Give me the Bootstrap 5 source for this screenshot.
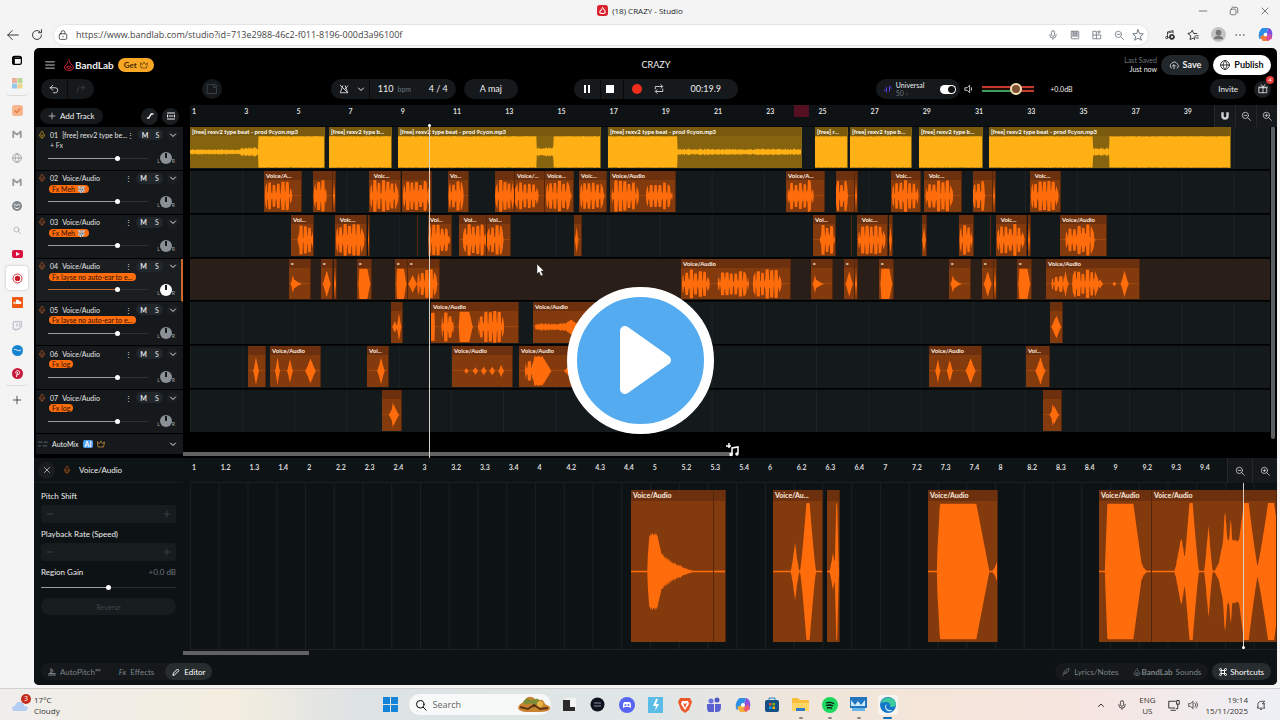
<!DOCTYPE html>
<html lang="en">
<head>
<meta charset="utf-8">
<meta name="viewport" content="width=device-width, initial-scale=1">
<title>(18) CRAZY - Studio</title>
<link href="https://cdn.jsdelivr.net/npm/bootstrap@5.3.0/dist/css/bootstrap.min.css" rel="stylesheet">
<style>
:root{--app:Lato,"Open Sans",sans-serif;--win:"Open Sans","Noto Sans",sans-serif;--panel:#15191c;--pill:#1c2125;--orange:#ff6c0c;--gold:#ffb014}
body{font-family:var(--win);font-size:10px;line-height:12px;background:#f4f4f4;color:#333;min-height:100vh;overflow:hidden}
svg{display:block;flex:none}
.ic{width:12px;height:12px;fill:none;stroke:currentColor;stroke-width:1.3;stroke-linecap:round;stroke-linejoin:round}
.ic-s{width:8px;height:8px}
.ic-m{width:10px;height:10px}
button{border:0;background:none;color:inherit;padding:0;font:inherit;display:flex;align-items:center;justify-content:center;flex:none}
/* browser chrome */
.titlebar{height:21px;font-size:8px}
.win-btns{position:absolute;right:10px;top:0;height:21px;gap:21px}
.win-btns .ic{stroke-width:1}
.addressbar{height:27px;padding:0 7px 0 7px}
.url-box{height:22px;background:#fff;border:1px solid #e4e4e4;border-radius:11px;margin-left:10px}
.url-box input{border:0;outline:0;background:none;font-size:9px;color:#444;height:18px}
.side-rail{width:34px}
.side-rail a{height:24px;width:22px;display:flex;align-items:center;justify-content:center;border-radius:4px;color:#333}
.side-rail a.on{background:#fff;box-shadow:0 0 3px #bbb}
.side-rail .cut{border-bottom:1px solid #ddd;margin-bottom:2px}
.fade-ic{opacity:.45}
/* studio */
.studio{background:#000;border-radius:5px;font-family:var(--app);color:#eee;font-size:8px;line-height:10px;margin-right:3px;overflow:hidden;min-width:0}
.head-grid{display:grid;grid-template-columns:1fr auto 1fr;align-items:center;padding:0 6px 0 7px}
.head-one{height:30px;padding-top:4px}
.head-two{height:27px;padding-bottom:5px}
.brand{font-size:10px;font-weight:700;color:#eee}
.pill{background:#15191c;border-radius:12px;height:20px;display:flex;align-items:center}
.pill-lite{background:#22272b}
.get-pill{background:#f9a825;color:#4b2c00;height:14px;width:36px;border-radius:7px;font-weight:700;gap:3px}
.split{width:1px;height:20px;background:#07090a}
.save{width:48px;font-size:9px;font-weight:700;gap:4px}
.publish{width:58px;font-size:9px;font-weight:700;background:#fff;color:#111;gap:4px}
.tempo{width:125px}
.clock{font-size:9px}
.transport{width:164px;padding:0 17px 0 8px}
.form-switch .form-check-input{width:16px;height:9px;margin:0;border:0;background-color:#fff;background-image:radial-gradient(circle,#111 0 3px,transparent 4px);background-size:9px 9px;background-position:right center;background-repeat:no-repeat;min-height:0;float:none;display:block}
.gift-count{position:absolute;top:-5px;right:-3px;width:8px;height:8px;border-radius:50%;background:#e53935;font-size:6px;line-height:8px;text-align:center}
.meter{width:52px;height:6px;background:linear-gradient(#c33a30 0 2px,#230a08 2px 4px,#3e9b5a 4px);position:relative}
.meter::after{content:"";position:absolute;right:0;top:4px;width:20px;height:2px;background:#c33a30}
.meter i{position:absolute;left:28px;top:-3px;width:12px;height:12px;border:2px solid #f5dfb5;border-radius:50%;background:#7d5133;z-index:1}
.gain-text{width:136px;font-size:7px}
/* ranges */
input[type=range]{appearance:none;-webkit-appearance:none;background:none;height:7px;margin:0;display:block;min-width:0}
input[type=range]::-webkit-slider-runnable-track{height:1px;background:linear-gradient(90deg,var(--on,#9a9ea1) var(--at,70%),#2c3134 0)}
input[type=range]::-webkit-slider-thumb{-webkit-appearance:none;width:5px;height:5px;border-radius:50%;background:#fff;margin-top:-2px}
/* arranger */
.left-col{width:149px;padding-left:2px;flex:none}
.tool-row{height:22px}
.circle{width:17px;height:17px;border-radius:50%;background:#1a1e21}
.tracks{display:grid;grid-auto-rows:1fr;height:307px}
.track-head{background:var(--panel);border-bottom:1px solid #000;padding:2px 5px 0 2px;color:#e6e6e6;font-size:7px;min-width:0}
.track-head.sel{border-right:2px solid #c8682a;padding-right:3px;background:#1a1e21}
.track-name{flex:1 1 0;white-space:nowrap}
.ms{background:#22272b;border-radius:6px;height:11px;width:27px}
.fx-chip{height:8px;line-height:8px;border-radius:4px;background:var(--orange);color:#2b0e00;padding:0 3px;font-size:7px;width:fit-content;white-space:nowrap;margin:1px 0 0 11px}
.fx-chip.none{background:none;color:#ddd;padding:0 1px}
.mix-row{padding:0 3px 0 10px;height:18px}
.mix-row input{width:100px}
.knob{width:12px;height:12px;border-radius:50%;background:#8a9096;position:relative}
.knob::after{content:"";position:absolute;left:5px;top:1px;width:2px;height:5px;background:#15191c}
.sel .knob{background:#fff}
.knob-wrap{font-size:5px;line-height:6px;color:#aaa;align-items:end}
.automix{height:20px;background:var(--panel);margin-bottom:4px;font-size:7px;padding:0 6px 0 2px}
.ai{background:#4a9df0;color:#fff;border-radius:2px;padding:0 2px;font-weight:700;line-height:8px}
.lane-area{position:relative;margin-left:7px;min-width:0}
.ruler{height:21px;background:#0e1214;position:relative;overflow:hidden}
.ruler span{position:absolute;top:1px;font-size:7px;line-height:10px;color:#ddd;font-weight:700;padding-left:2px}
.lane{position:relative;border-bottom:1px solid #000;border-top:1px solid #070909;background:#14191c linear-gradient(90deg,#1c2225 1px,transparent 1px);background-size:calc(100% / 20.7) 100%;overflow:hidden}
.lane.sel{background-color:#2a1f18;background-image:none}
.clip{position:absolute;top:0;bottom:1px;background:#833a0c;color:#fff0e0;font-size:6px;line-height:9px;overflow:hidden;white-space:nowrap;border-right:1px solid #54270c}
.clip b{display:block;height:9px;padding-left:2px;background:#6d300e;font-weight:700;position:relative}
.clip svg{position:absolute;left:0;top:9px;width:100%;height:calc(100% - 9px)}
.clip path{fill:var(--orange)}
.clip.gold{background:#86630f;border-right-color:#86630f}
.clip.gold b{background:#7a5a0c;color:#fff}
.clip.gold path{fill:var(--gold)}
.playhead{position:absolute;width:1px;background:#d8cfc4;z-index:3}
.playhead::before{content:"";position:absolute;left:-1px;top:0;width:3px;height:3px;border-radius:50%;background:#fff}
.playhead.low::before{top:auto;bottom:0}
.zoom-tools{position:absolute;right:0;top:0;z-index:2}
.zoom-tools button{width:21px;height:22px;background:#15191c;border-left:1px solid #22282b;color:#ccc}
.editor .zoom-tools button{width:25px;height:25px}
.vscroll{width:4px;background:#5c5f61;border-radius:2px;margin:21px 2px 19px 1px;flex:none}
.hscroll{position:absolute;height:4px;background:#626262;z-index:2}
.loop-mark{position:absolute;top:0;height:12px;background:#541020}
.pointer{position:absolute;z-index:4}
/* editor */
.editor{background:#0d1214}
.editor-left{font-size:8px;padding:8px 7px 0 7px}
.stepper{height:18px;border-radius:3px;background:#171c1f;color:#485056;padding:0 5px;margin:4px 0 6px}
.gain-row{margin-bottom:7px}
.reverse{height:17px;border-radius:9px;background:#171c1f;color:#3f464a;font-size:7px;margin-top:7px}
.edit-ruler{height:25px;background:#0e1315;border-bottom:1px solid #191f21}
.edit-ruler span{top:4px}
.edit-body{position:relative;overflow:hidden;border-bottom:1px solid #1d2325;margin-bottom:8px;background:linear-gradient(90deg,#1a2022 1px,transparent 1px);background-size:calc(100% / 37.8) 100%}
.edit-body .clip{top:7px;bottom:7px;font-size:7px;line-height:11px;font-weight:400}
.edit-body .clip b{height:11px;font-weight:700}
.edit-body .clip svg{top:13px;height:calc(100% - 15px)}
.footbar{height:27px;padding:0 6px 0 7px;background:#0d1214;color:#7c8488;font-size:8px}
.footbar .pill{height:17px;font-size:8px;gap:4px}
.footbar button.pill{padding:0 7px}
.footbar .tight{padding:0 6px}
.footbar .lit{background:#272c2f;color:#fff}
/* overlay */
.big-play{position:fixed;left:50%;top:50%;width:147px;height:147px;margin:-73px 0 0 -73px;border-radius:50%;border:10px solid #fff;background:#55abef;z-index:10}
/* taskbar */
.taskbar{display:grid;grid-template-columns:1fr auto 1fr;align-items:center;height:32px;margin-top:3px;border-top:1px solid #d3cfcf;background:linear-gradient(90deg,#f0eeec,#f4eee0 18%,#dde2e4 28%,#e1e6e6 52%,#efe6dc 62%,#f4e5d8 72%,#f6e4df 84%,#eef0f6);font-size:9px;line-height:11px;padding:0 14px 0 12px}
.task-icons>button{width:20px;height:20px;position:relative;margin-right:9px}
.task-icons .run::after{content:"";position:absolute;bottom:-4px;width:4px;height:2px;border-radius:1px;background:#888}
.task-icons .run-on{background:#f8f5f0;border-radius:3px}
.task-icons .run-on::after{width:9px;background:#0a6fb8}
.search{width:142px;height:21px;border-radius:11px;background:#f7f8f8;margin:0 8px 0 8px;padding:0 0 0 6px}
.search input{border:0;outline:0;background:none;font-size:9px;width:80px}
.search input::placeholder{color:#666}
.alerts{position:absolute;left:9px;top:-4px;width:10px;height:10px;border-radius:50%;background:#c42b1c;color:#fff;font-size:7px;line-height:10px;text-align:center}
</style>
</head>
<body class="d-flex flex-column">
<svg class="d-none">
<symbol id="mic" viewBox="0 0 16 16"><rect x="5.5" y="1" width="5" height="9" rx="2.5"/><path d="M3 7v1a5 5 0 0 0 10 0V7M8 13v2"/></symbol>
<symbol id="chev" viewBox="0 0 16 16"><path d="M3 6l5 5 5-5" stroke-width="2"/></symbol>
<symbol id="plus" viewBox="0 0 16 16"><path d="M8 2v12M2 8h12"/></symbol>
<symbol id="minus" viewBox="0 0 16 16"><path d="M2 8h12"/></symbol>
<symbol id="cross" viewBox="0 0 16 16"><path d="M3 3l10 10M13 3L3 13"/></symbol>
<symbol id="zout" viewBox="0 0 16 16"><circle cx="7" cy="7" r="5"/><path d="M11 11l4 4M5 7h4"/></symbol>
<symbol id="zin" viewBox="0 0 16 16"><circle cx="7" cy="7" r="5"/><path d="M11 11l4 4M5 7h4M7 5v4"/></symbol>
<symbol id="find" viewBox="0 0 16 16"><circle cx="7" cy="7" r="5"/><path d="M11 11l4 4"/></symbol>
<symbol id="crown" viewBox="0 0 16 16"><path d="M1 4l4 3 3-5 3 5 4-3-2 10H3z"/></symbol>
<symbol id="undo" viewBox="0 0 16 16"><path d="M6 2L2 6l4 4M2 6h8a4 4 0 0 1 0 8H7"/></symbol>
<symbol id="flame" viewBox="0 0 16 16"><path d="M8 1c1 4 2 5 4 7 4 3 2 7-4 7s-8-4-4-7c1-1 2-2 2-4M5 11c0-2 6-2 6 0s-6 2-6 0"/></symbol>
<symbol id="star" viewBox="0 0 16 16"><path d="M8 1l2 5 5 .5-4 3.500 1.500 5L8 12.200 3.500 15 5 10 1 6.500 6 6z"/></symbol>
<symbol id="globe" viewBox="0 0 16 16"><circle cx="8" cy="8" r="7"/><path d="M1 8h14M8 1c-4 4-4 10 0 14M8 1c4 4 4 10 0 14"/></symbol>
<symbol id="sound" viewBox="0 0 16 16"><path d="M1 6h3l4-4v12l-4-4H1zM11 5c2 2 2 4 0 6M13 3c3 3 3 7 0 10"/></symbol>
</svg>

<header class="titlebar d-flex align-items-center justify-content-center gap-1 position-relative">
  <svg width="11" height="11" viewBox="0 0 16 16"><rect width="16" height="16" rx="4" fill="#d9232e"/><path d="M8 3c0 3 4 4 4 7s-8 3-8 0c0-2 3-2 3-5" fill="none" stroke="#fff" stroke-width="1.500"/></svg>
  <span class="text-dark">(18) CRAZY - Studio</span>
  <div class="win-btns d-flex align-items-center">
    <button aria-label="Minimize"><svg class="ic ic-m"><use href="#minus"/></svg></button>
    <button aria-label="Restore"><svg class="ic ic-m" viewBox="0 0 16 16"><rect x="2" y="5" width="9" height="9" rx="2"/><path d="M5 2h6a3 3 0 0 1 3 3v6"/></svg></button>
    <button aria-label="Close"><svg class="ic ic-m"><use href="#cross"/></svg></button>
  </div>
</header>

<div class="addressbar d-flex align-items-center">
  <button aria-label="Back"><svg class="ic" viewBox="0 0 16 16"><path d="M15 8H1M7 2L1 8l6 6"/></svg></button>
  <button aria-label="Reload" class="ms-2 ps-1"><svg class="ic" viewBox="0 0 16 16"><path d="M14 8a6 6 0 1 1-2-4.500M14 1v4h-4"/></svg></button>
  <div class="url-box d-flex align-items-center flex-fill px-1">
    <svg class="ic ic-m me-2" viewBox="0 0 16 16"><rect x="2" y="6" width="12" height="9" rx="2"/><path d="M5 6V4a3 3 0 0 1 6 0v2M8 10v1"/></svg>
    <input class="flex-fill p-0" aria-label="Address" value="https://www.bandlab.com/studio?id=713e2988-46c2-f011-8196-000d3a96100f">
    <div class="d-flex gap-2 text-secondary align-items-center">
      <svg class="ic ic-m me-1"><use href="#mic"/></svg>
      <svg class="ic ic-m me-1" viewBox="0 0 16 16"><rect x="2" y="2" width="12" height="12" rx="1"/><path d="M5 3v7M8 3v7M11 3v7" stroke-width="2"/></svg>
      <svg class="ic ic-m me-1" viewBox="0 0 16 16"><path d="M2 2h5v12H2zM2 8h12v6H7M11 1v5M9 3h5"/></svg>
      <svg class="ic ic-m"><use href="#zout"/></svg>
      <svg class="ic"><use href="#star"/></svg>
    </div>
  </div>
  <div class="d-flex align-items-center ms-2 ps-1 gap-2">
    <svg class="ic ic-m ms-1 me-1" viewBox="0 0 16 16"><path d="M4 12V3l9-2v4M4 5l8-2"/><circle cx="3" cy="12" r="2"/><circle cx="11" cy="11" r="4" fill="#333"/><circle cx="11" cy="11" r="1" fill="#fff" stroke="#fff"/></svg>
    <svg class="ic me-1" viewBox="0 0 16 16"><path d="M7 2l2 4 4 0M13 9h2M13 12h2M9 12l-5 2 1-5-4-3 4-1 2-3M11 9l-1 5"/></svg>
    <svg width="15" height="15" viewBox="0 0 16 16"><circle cx="8" cy="8" r="8" fill="#c4c4c4"/><circle cx="8" cy="6" r="3" fill="#777"/><path d="M3 13c0-5 10-5 10 0z" fill="#777"/></svg>
    <svg class="ic" viewBox="0 0 16 16"><path d="M3 8h0M8 8h0M13 8h0" stroke-width="2"/></svg>
    <svg width="15" height="15" class="ms-1" viewBox="0 0 16 16"><path d="M5 1h6l-3 8-6 4C-1 9 2 2 5 1z" fill="#2b8fe6"/><path d="M11 1c5 1 5 8 3 12l-6-3z" fill="#7a4fe0"/><path d="M2 10l5-2 5 3-1 4H5z" fill="#f2793a"/><path d="M13 7l2 5-4 3-3-3z" fill="#e14b9a"/><circle cx="8" cy="8" r="2" fill="#fff"/></svg>
  </div>
</div>

<main class="d-flex flex-fill">
  <nav class="side-rail d-flex flex-column align-items-center" aria-label="Tabs">
    <a href="#" aria-label="Tab actions"><svg class="ic ic-m text-black" viewBox="0 0 16 16"><rect x="1" y="2" width="14" height="13" rx="3" stroke-width="2"/><path d="M3 3v11M1 5h14" stroke-width="3"/></svg></a>
    <a href="#" class="cut" aria-label="Workspace"><svg width="11" height="11" viewBox="0 0 10 10" opacity=".6"><path d="M0 0h4.500v4.500H0z" fill="#e8845f"/><path d="M5 0h4.500v4.500H5z" fill="#8fc35a"/><path d="M0 5h4.500v4.500H0z" fill="#55a9e3"/><path d="M5 5h4.500v4.500H5z" fill="#eac04d"/></svg></a>
    <a href="#" aria-label="Tasks"><svg width="11" height="11" viewBox="0 0 16 16"><rect width="16" height="16" rx="4" fill="#f6b48f"/><path d="M4 8l3 3 5-6" fill="none" stroke="#e97b3c" stroke-width="2"/></svg></a>
    <a href="#" aria-label="Mail"><svg class="ic ic-m fade-ic" viewBox="0 0 16 16"><path d="M2 13V4l6 5 6-5v9" stroke-width="3"/></svg></a>
    <a href="#" aria-label="Web"><svg class="ic ic-m fade-ic"><use href="#globe"/></svg></a>
    <a href="#" aria-label="Mail two"><svg class="ic ic-m fade-ic" viewBox="0 0 16 16"><path d="M2 13V4l6 5 6-5v9" stroke-width="3"/></svg></a>
    <a href="#" aria-label="Assistant"><svg width="10" height="10" viewBox="0 0 16 16"><circle cx="8" cy="8" r="8" fill="#81898f"/><path d="M3 7c2-3 4 1 5 0s3-3 5 0M4 10c3 3 5 3 8 0" stroke="#fff" stroke-width="1.500" fill="none"/></svg></a>
    <a href="#" aria-label="Find"><svg class="ic ic-s fade-ic"><use href="#find"/></svg></a>
    <a href="#" aria-label="Video"><svg width="11" height="8" viewBox="0 0 11 8"><rect width="11" height="8" rx="2" fill="#d8123c"/><path d="M4 2l4 2-4 2z" fill="#fff"/></svg></a>
    <a href="#" class="on" aria-label="Studio"><svg width="11" height="11" viewBox="0 0 11 11"><circle cx="5.500" cy="5.500" r="4.500" fill="none" stroke="#d5303c"/><circle cx="5.500" cy="5.500" r="2.700" fill="#c81e2b"/></svg></a>
    <a href="#" aria-label="Sounds"><svg width="11" height="11" viewBox="0 0 11 11"><rect width="11" height="11" rx="1" fill="#f25a13"/><path d="M2 5v2M3 4.500V7" stroke="#fff"/><path d="M4 7V3c3-1 3 1 4 1.500 2 0 2 2.500 0 2.500z" fill="#fff"/></svg></a>
    <a href="#" aria-label="Stream"><svg class="ic ic-m fade-ic" viewBox="0 0 16 16" color="#8c84a8"><path d="M3 1h12v8l-4 4H8l-2 2v-2H2V4zM8 4v4M12 4v4" stroke-width="2"/></svg></a>
    <a href="#" aria-label="Cloud"><svg width="11" height="11" viewBox="0 0 11 11"><circle cx="5.500" cy="5.500" r="5.500" fill="#1583cf"/><path d="M2 5c2-2 3 2 7 0" stroke="#fff" fill="none"/></svg></a>
    <a href="#" class="cut" aria-label="Pins"><svg width="11" height="11" viewBox="0 0 11 11"><circle cx="5.500" cy="5.500" r="5.500" fill="#c8193c"/><path d="M4.500 9l1-5M4 5.500c-1.500-3 3.500-4 3.500-1C7.500 7 5.500 7 5 6" stroke="#fff" fill="none"/></svg></a>
    <a href="#" aria-label="New tab"><svg class="ic ic-m"><use href="#plus"/></svg></a>
  </nav>

  <section class="studio d-flex flex-column flex-fill">
    <div class="head-grid head-one">
      <div class="d-flex align-items-center">
        <button aria-label="Menu" class="ms-1"><svg class="ic ic-m" viewBox="0 0 16 16"><path d="M1 3h14M1 8h14M1 13h14"/></svg></button>
        <svg class="ic ms-2" viewBox="0 0 16 16" color="#e2233a"><use href="#flame"/></svg>
        <span class="brand">BandLab</span>
        <button class="get-pill ms-1">Get <svg class="ic ic-s"><use href="#crown"/></svg></button>
      </div>
      <div class="clock">CRAZY</div>
      <div class="d-flex align-items-center justify-content-end gap-1">
        <div class="text-end" style="line-height:9px;font-size:7px"><span class="text-secondary">Last Saved</span><br>Just now</div>
        <button class="pill pill-lite save"><svg class="ic ic-m" viewBox="0 0 16 16"><path d="M4 13a4 4 0 0 1 0-7 5 5 0 0 1 9 0 4 4 0 0 1 0 7M8 14V8M5.500 10L8 7.500l2.500 2.500"/></svg>Save</button>
        <button class="pill publish"><svg class="ic ic-m"><use href="#globe"/></svg>Publish</button>
      </div>
    </div>

    <div class="head-grid head-two">
      <div class="d-flex align-items-center">
        <div class="pill"><button aria-label="Undo" class="px-2 ps-1"><svg class="ic ic-m ms-1"><use href="#undo"/></svg></button><i class="split"></i><button aria-label="Redo" class="px-2" style="color:#3a4044"><svg class="ic ic-m" viewBox="0 0 16 16"><path d="M10 2l4 4-4 4M14 6H6a4 4 0 0 0-4 4v3"/></svg></button></div>
        <button class="pill px-1 mx-auto" aria-label="Notes" style="color:#3a4044"><svg class="ic" viewBox="0 0 16 16"><path d="M2 2h8v4h4v8H2zM12 1v3h3"/></svg></button>
        <div class="pill tempo clock me-2">
          <button aria-label="Metronome" class="ps-2"><svg class="ic ic-m" viewBox="0 0 16 16"><path d="M6 3L2 14h12L10 3M2 2l11 11M9 9l5-6"/></svg></button>
          <button aria-label="Metronome options" class="ps-2 pe-1"><svg class="ic ic-s"><use href="#chev"/></svg></button><i class="split"></i>
          <span class="ms-2">110</span><small class="ms-1 text-secondary" style="font-size:7px">bpm</small><span class="ms-auto me-2">4 / 4</span>
        </div>
        <button class="pill px-3 clock me-5"><span>A maj</span></button>
        <span class="ms-2"></span>
      </div>
      <div class="pill transport clock">
        <button aria-label="Pause"><svg width="10" height="10" viewBox="0 0 10 10"><path d="M2 1h2v8H2zM6 1h2v8H6z" fill="#fff"/></svg></button><i class="split ms-2 me-1"></i>
        <button aria-label="Stop"><svg width="10" height="10"><path d="M1 1h8v8H1z" fill="#fff"/></svg></button><i class="split ms-2 me-1"></i>
        <button aria-label="Record" class="ms-1"><svg width="10" height="10"><circle cx="5" cy="5" r="5" fill="#f02d1d"/></svg></button>
        <button aria-label="Loop" class="ms-2 ps-1"><svg class="ic ic-m" viewBox="0 0 16 16"><path d="M2 8V4h11M11 1l3 3-3 3M14 8v4H3M5 9l-3 3 3 3"/></svg></button>
        <span class="ms-auto">00:19.9</span>
      </div>
      <div class="d-flex align-items-center">
        <div class="pill ps-2 pe-1 ms-auto" style="line-height:8px;font-size:7px">
          <svg class="ic ic-s me-1" viewBox="0 0 16 16" color="#5b35d6"><path d="M2 12V9M5 14V5M11 13V2M14 7V4" stroke-width="2"/></svg>
          <div class="me-3">Universal<br><span class="text-secondary">50 ›</span></div>
          <div class="form-switch p-0"><input class="form-check-input" type="checkbox" role="switch" aria-label="Universal on" checked></div>
        </div>
        <svg class="ic ic-m ms-1 me-2" viewBox="0 0 16 16"><path d="M2 6h3l4-4v12l-4-4H2zM12 6v4"/></svg>
        <div class="meter"><i></i></div>
        <span class="ms-3 gain-text">+0.0dB</span>
        <button class="pill px-2 ms-4 me-2">Invite</button>
        <button class="circle position-relative" aria-label="Gifts"><svg class="ic ic-m" viewBox="0 0 16 16"><path d="M2 6h12v8H2zM8 6v8M1 5h14M5 1l3 4 3-4"/></svg><span class="gift-count">4</span></button>
      </div>
    </div>

    <div class="d-flex position-relative">
      <div class="left-col d-flex flex-column">
        <div class="tool-row d-flex align-items-center ps-1">
          <button class="pill px-2 gap-1" style="height:16px"><svg class="ic ic-s"><use href="#plus"/></svg>Add Track</button>
          <button class="circle ms-auto me-1" aria-label="Automation"><svg class="ic ic-s" viewBox="0 0 16 16"><path d="M4 12c5 0 3-8 8-8M3 12h3M10 4h4" stroke-width="3"/></svg></button>
          <button class="circle me-1" aria-label="Snap"><svg class="ic ic-s" viewBox="0 0 16 16"><path d="M1 2h14M1 14h14M1 6v4M15 6v4M4 8h8" stroke-width="2"/></svg></button>
        </div>
        <div class="tracks" id="heads"></div>
        <div class="automix d-flex align-items-center gap-1">
          <svg class="ic ic-m text-secondary" viewBox="0 0 16 16"><path d="M1 5h6M10 5h5M1 11h3M8 11h6"/></svg>AutoMix<span class="ai">AI</span>
          <svg class="ic ic-s" color="#f0a93a"><use href="#crown"/></svg>
          <button class="ms-auto" aria-label="Expand AutoMix"><svg class="ic ic-s"><use href="#chev"/></svg></button>
        </div>
      </div>
      <div class="lane-area flex-fill">
        <div class="ruler" id="ruler"></div>
        <div class="tracks" id="lanes"></div>
        <div class="playhead" id="playhead"></div>
      </div>
      <div class="vscroll"></div>
      <div class="zoom-tools d-flex">
        <button aria-label="Snap to grid"><svg class="ic ic-m" viewBox="0 0 16 16"><path d="M4 2v6a4 4 0 0 0 8 0V2" stroke-width="4" stroke-linecap="butt"/></svg></button>
        <button aria-label="Zoom out"><svg class="ic ic-m"><use href="#zout"/></svg></button>
        <button aria-label="Zoom in"><svg class="ic ic-m"><use href="#zin"/></svg></button>
      </div>
      <div class="hscroll" style="left:12%;width:44.2%;bottom:2px"></div>
      <svg class="pointer" style="left:40.4%;top:45%" width="9" height="13" viewBox="0 0 9 13"><path d="M1 0v10l2-2 2 4 2-1-2-4h3z" fill="#fff" stroke="#222" stroke-width=".5"/></svg>
      <svg class="pointer" style="left:55.7%;bottom:1px" width="14" height="14" viewBox="0 0 14 14" fill="none" stroke="#fff" stroke-width="1.500"><path d="M3 0v5M0 3h5M6 11V5l6-1v6"/><circle cx="5" cy="11.500" r="1"/><circle cx="11" cy="11" r="1"/></svg>
    </div>

    <div class="editor d-flex flex-fill position-relative">
      <div class="left-col ps-0">
        <div class="edit-ruler d-flex align-items-center ps-1 gap-1">
          <button class="circle" aria-label="Close editor"><svg class="ic ic-s"><use href="#cross"/></svg></button>
          <svg class="ic ic-s ms-1" color="#c25d1c"><use href="#mic"/></svg><span class="ms-1">Voice/Audio</span>
        </div>
        <div class="editor-left">
          <div>Pitch Shift</div>
          <div class="stepper d-flex align-items-center justify-content-between"><button aria-label="Pitch down"><svg class="ic ic-s"><use href="#minus"/></svg></button><button aria-label="Pitch up"><svg class="ic ic-s"><use href="#plus"/></svg></button></div>
          <div>Playback Rate (Speed)</div>
          <div class="stepper d-flex align-items-center justify-content-between"><button aria-label="Rate down"><svg class="ic ic-s"><use href="#minus"/></svg></button><button aria-label="Rate up"><svg class="ic ic-s"><use href="#plus"/></svg></button></div>
          <div class="gain-row d-flex justify-content-between"><label for="gain">Region Gain</label><span class="text-secondary">+0.0 dB</span></div>
          <input type="range" id="gain" class="w-100" value="50" style="--at:50%">
          <button class="reverse w-100">Reverse</button>
        </div>
      </div>
      <div class="lane-area flex-fill d-flex flex-column">
        <div class="ruler edit-ruler" id="eruler"></div>
        <div class="edit-body flex-fill" id="ebody"></div>
      </div>
      <div class="zoom-tools d-flex">
        <button aria-label="Editor zoom out"><svg class="ic ic-m"><use href="#zout"/></svg></button>
        <button aria-label="Editor zoom in"><svg class="ic ic-m"><use href="#zin"/></svg></button>
      </div>
      <div class="hscroll" style="left:12%;width:10.1%;bottom:3px"></div>
    </div>

    <div class="footbar d-flex align-items-center">
      <div class="pill">
        <button class="pill"><svg class="ic ic-s" viewBox="0 0 16 16"><path d="M6 2c5 0 5 7 0 7M1 14h14M2 11h12M6 2v7" stroke-width="2"/></svg>AutoPitch™</button>
        <button class="pill tight"><i>Fx</i>Effects</button>
        <button class="pill lit"><svg class="ic ic-s" viewBox="0 0 16 16"><path d="M2 14l1-4 8-8 3 3-8 8z" stroke-width="2"/></svg>Editor</button>
      </div>
      <div class="pill ms-auto me-1" style="gap:0">
        <button class="pill"><svg class="ic ic-s" viewBox="0 0 16 16"><path d="M2 15C3 8 6 2 14 1c0 7-4 10-9 10M5 11l5-5"/></svg>Lyrics/Notes</button>
        <button class="pill tight" style="gap:1px"><svg class="ic ic-s"><use href="#flame"/></svg><strong>BandLab</strong>&nbsp;Sounds</button>
      </div>
      <button class="pill lit tight" style="gap:3px"><svg class="ic ic-s" viewBox="0 0 16 16"><path d="M5 5h6v6H5zM5 5H3a2 2 0 1 1 2-2zM11 5V3a2 2 0 1 1 2 2zM11 11h2a2 2 0 1 1-2 2zM5 11v2a2 2 0 1 1-2-2z" stroke-width="2"/></svg>Shortcuts</button>
    </div>
  </section>
</main>

<footer class="taskbar">
  <div class="d-flex align-items-center gap-1">
    <div class="position-relative"><svg width="18" height="14" viewBox="0 0 18 14"><path d="M3 13c-4 0-4-5 0-5 1-6 9-5 9 0 5-1 5 5 1 5z" fill="#b5cdf2"/></svg><span class="alerts">3</span></div>
    <div style="font-size:8px">17°C<br>Cloudy</div>
  </div>
  <div class="task-icons d-flex align-items-center">
    <button aria-label="Start" class="m-0"><svg width="15" height="15" viewBox="0 0 15 15"><path d="M0 0h7v7H0zM8 0h7v7H8zM0 8h7v7H0zM8 8h7v7H8z" fill="#1583d8"/></svg></button>
    <div class="search d-flex align-items-center"><svg class="ic text-black"><use href="#find"/></svg><input class="ms-1" aria-label="Search" placeholder="Search">
      <svg class="ms-auto" width="34" height="17" viewBox="0 0 34 17"><path d="M1 12c2-6 5-4 7-8s7-4 10-1 7-2 9 3 6 2 6 6-7 4-14 4-16 1-18-4z" fill="#c98431"/><path d="M6 6c3-5 6-3 8-2s6-3 8 0-2 6-6 4-8 3-10-2z" fill="#7c8d35"/><path d="M3 11l8 2 6-4 6 4 8-1" stroke="#5e3513" stroke-width="2" fill="none"/><circle cx="23" cy="8" r="3" fill="#e8b445"/></svg></div>
    <button aria-label="Task view"><svg width="14" height="14"><path d="M4 0h10v10H4z" fill="#f4f4f4"/><path d="M1 2h7v7h5v4H1z" fill="#2b2b2b"/></svg></button>
    <button aria-label="Recorder"><svg width="15" height="15" viewBox="0 0 15 15"><circle cx="7.500" cy="7.500" r="7" fill="#10131f"/><path d="M4 6h7M4 9h7" stroke="#8790a5"/></svg></button>
    <button aria-label="Discord"><svg width="16" height="16" viewBox="0 0 16 16"><circle cx="8" cy="8" r="8" fill="#5865f2"/><path d="M4 11c0-4 0-6 2-6h4c2 0 2 2 2 6l-2-1H6z" fill="#fff"/><circle cx="6.500" cy="8" r="1" fill="#5865f2"/><circle cx="9.500" cy="8" r="1" fill="#5865f2"/></svg></button>
    <button aria-label="Flash"><svg width="15" height="16"><path d="M0 0h15v16H0z" fill="#5bbde6"/><path d="M8 2L5 9h3l-1 5 4-7H8l2-5z" fill="#fff"/></svg></button>
    <button aria-label="Brave"><svg width="14" height="16" viewBox="0 0 14 16"><path d="M2 1h10l2 4-3 8-4 3-4-3-3-8z" fill="#ee5a2b"/><path d="M4 4h6l1 3-4 6-4-6z" fill="#fff"/><path d="M5 6l2 1 2-1-2 5z" fill="#ee5a2b"/></svg></button>
    <button aria-label="Teams"><svg width="16" height="15" viewBox="0 0 16 15"><circle cx="5" cy="4" r="2.500" fill="#6a6fe0"/><circle cx="11" cy="3" r="2.500" fill="#5058c4"/><path d="M1 7h7v8H3c-2 0-2-4-2-8zM9 7h6c0 5 0 8-4 8H9z" fill="#5a60d0"/></svg></button>
    <button aria-label="Copilot"><svg width="16" height="16" viewBox="0 0 16 16"><path d="M5 1h6l-3 8-6 4C-1 9 2 2 5 1z" fill="#2b8fe6"/><path d="M11 1c5 1 5 8 3 12l-6-3z" fill="#8a55dd"/><path d="M2 10l5-2 5 3-1 4H5z" fill="#f0b03a"/><path d="M13 7l2 5-4 3-3-3z" fill="#ef5c6f"/><circle cx="8" cy="8" r="2" fill="#fff"/></svg></button>
    <button aria-label="Store"><svg width="16" height="16" viewBox="0 0 16 16"><path d="M5 4V1h6v3" fill="none" stroke="#2784c9"/><rect x="1" y="3" width="14" height="12" rx="2" fill="#164f84"/><path d="M5 6h2.500v2.500H5z" fill="#f25022"/><path d="M8.500 6H11v2.500H8.500z" fill="#7fba00"/><path d="M5 9.500h2.500V12H5z" fill="#00a4ef"/><path d="M8.500 9.500H11V12H8.500z" fill="#ffb900"/></svg></button>
    <button class="run" aria-label="Files"><svg width="17" height="15"><path d="M0 1h6l2 2h9v11H0z" fill="#f7bf3c"/><path d="M0 6h17v8H0z" fill="#ffd666"/><path d="M4 11h9v3H4z" fill="#2e7cc7"/></svg></button>
    <button class="run" aria-label="Spotify"><svg width="16" height="16" viewBox="0 0 16 16"><circle cx="8" cy="8" r="8" fill="#1ed760"/><path d="M4 6c3-1 6-1 8 1M4 8.500c3-1 5-.5 7 .5M5 11c2-.5 4-.5 5 .5" stroke="#111" stroke-width="1.300" fill="none"/></svg></button>
    <button class="run" aria-label="Photos"><svg width="17" height="15"><path d="M0 0h17v11H0z" fill="#2276bd"/><path d="M1 9V3l4 5 3-4 3 4 4-5v6z" fill="#cdeafb"/><path d="M2 11h13v3H2z" fill="#67b5e6"/></svg></button>
    <button class="run run-on me-0" aria-label="Edge"><svg width="16" height="16" viewBox="0 0 16 16"><circle cx="8" cy="8" r="8" fill="#1477c9"/><path d="M1 6C3-1 15-1 16 7c0 3-5 4-6 2 1-4-4-5-9-3z" fill="#3fcb9d"/><path d="M7 7c-3 4 1 7 6 6-5 4-11-3-6-6z" fill="#e6f6fc"/></svg></button>
  </div>
  <div class="d-flex align-items-center justify-content-end gap-2">
    <svg class="ic ic-s" viewBox="0 0 16 16"><path d="M3 11l5-5 5 5" stroke-width="2"/></svg>
    <svg class="ic ic-m ms-1 me-1"><use href="#mic"/></svg>
    <div class="text-center" style="font-size:8px">ENG<br>US</div>
    <svg class="ic ms-1" viewBox="0 0 16 16"><path d="M10 3H1v9h8M4 15h6M12 2h3v5h-3zM13 7v6h-2"/></svg>
    <svg class="ic ic-m"><use href="#sound"/></svg>
    <div class="text-end" style="font-size:8px">19:14<br>15/11/2025</div>
    <svg class="ic ic-m" viewBox="0 0 16 16"><path d="M3 11V7a5 5 0 0 1 6-5M13 7v4l1 2H2l1-2M7 15h2M10 2h4l-4 4h4"/></svg>
  </div>
</footer>

<button class="big-play" aria-label="Play video"><svg width="127" height="127" viewBox="0 0 127 127"><path d="M48 34L89 63 48 92z" fill="#fff" stroke="#fff" stroke-width="10" stroke-linejoin="round"/></svg></button>

<script src="https://cdn.jsdelivr.net/npm/bootstrap@5.3.0/dist/js/bootstrap.bundle.min.js"></script>
<script>
/* Time is kept in timeline units; SPAN and EDIT_SPAN are the visible lengths. */
const SPAN = 1080, EDIT_SPAN = 1087;
const el = id => document.getElementById(id);
const noise = n => { const v = Math.sin(n * 12.9898) * 43758.5453; return v - Math.floor(v); };

/* bursts: [from %, to %, loudness, shape] */
function level(t, bursts, i, seed) {
  let a = 0.012;
  for (const [f, e, amp, k] of bursts) {
    if (t < f || t > e) continue;
    const u = (t - f) / (e - f), r = noise(i + seed), group = noise(Math.floor(i / 9) + seed);
    let v = amp;
    if (k === 's') v *= Math.min(1, u * 5 + .5, (1 - u) * 5 + .35) * (i % 9 < 5 + group * 2 ? .7 + .35 * group : .1 + .35 * r);
    if (k === 'd') v *= Math.pow(1 - Math.abs(2 * u - 1), 1.2) * (.85 + .15 * r);
    if (k === 'r') v *= Math.pow(u, 1.4) * (.8 + .2 * r);
    if (k === 'f') v *= Math.pow(1 - u, 1.8) * (.7 + .3 * r);
    if (k === 'h') v *= Math.min(1, u * 6 + .3, (1 - u) * 2.2) * (.9 + .1 * r);
    if (k === 'k') v *= Math.min(1, u * 14 + .2, (1 - u) * 4);
    if (k === 'p') v *= Math.min(1, Math.pow(1.25 * (1 - Math.abs(2 * u - 1)), 1.2));
    if (k === 'b') v *= .96 + .04 * r;
    if (k === 'n') v *= .5 + .5 * r;
    a = Math.max(a, v);
  }
  return Math.min(a, 1);
}
function wave(w, bursts, seed) {
  const n = Math.max(6, Math.round(w * 2)), up = [], dn = [];
  for (let i = 0; i <= n; i++) {
    const a = level(i / n * 100, bursts, i, seed) * 50, x = (i / n * 100).toFixed(1);
    up.push(x + ' ' + (50 - a).toFixed(1)); dn.unshift(x + ' ' + (50 + a).toFixed(1));
  }
  return `<svg viewBox="0 0 100 100" preserveAspectRatio="none"><path d="M${up.concat(dn).join('L')}z"/></svg>`;
}
function clip([from, to, name, bursts], span, off, gold) {
  return `<div class="clip${gold ? ' gold' : ''}" style="left:${(from - off) / span * 100}%;width:${(to - from) / span * 100}%"><b>${name || ''}</b>${wave(to - from, bursts || [[4, 94, .97, 's']], from)}</div>`;
}

const F = '[free] rexv2 type beat - prod 9cyon.mp3', V = 'Voice/Audio', full = [[0, 100, 1, 'b']];
const tail = [[8, 30, .6, 'd'], [14, 70, .5, 'f']], dia = [[15, 90, .9, 'd']], blk = [[12, 95, .95, 'k']], thin = [[0, 100, .9, 'd']];
const tracks = [
 {n:'[free] rexv2 type be...', fx:'', c:[[190,325,F,[[0,51,.18,'n'],[38,50,.3,'n'],[51,100,1,'b']]],[329,392,'[free] rexv2 type b...',full],[398,601,F,[[0,68.500,1,'b'],[68,77,.3,'n'],[77,100,1,'b']]],[608,802,F,[[0,36,1,'b'],[36,100,.22,'n']]],[815,848,'[free] r...',full],[850,912,'[free] rexv2 type b...',full],[919,983,'[free] rexv2 type b...',full],[989,1231,F,[[0,43,1,'b'],[43,50,.28,'n'],[50,100,1,'b']]]]},
 {n:V, fx:'Fx Meh 🐺', c:[[264,302,'Voice/A...',[[3,75,.97,'s']]],[313,333,'',[[5,72,.95,'s']]],[333,336,'',thin],[369,401,'&nbsp; Voic...'],[402,432,''],[448,469,'Vo...',[[3,78,.97,'s']]],[495,515,'',[[2,100,.97,'s']]],[515,545,'Voice/...',[[0,80,.97,'s']]],[545,574,'Voice...'],[579,607,'Voic...'],[610,676,V,[[3,44,.97,'s'],[56,96,.97,'s']]],[786,825,'Voice/A...',[[4,72,.97,'s']]],[836,855,'',[[0,66,.95,'s']]],[855,858,'',thin],[891,921,'&nbsp; Voic...'],[924,962,'&nbsp; Voic...',[[4,78,.97,'s']]],[973,993,'',[[0,64,.9,'s']]],[993,996,'',thin],[1030,1061,'&nbsp; Voic...']]},
 {n:V, fx:'Fx Meh 🐺', c:[[291,314,'Voi...',[[32,100,.95,'s']]],[335,367,'&nbsp; Voic...'],[368,370,'',thin],[417,418,'',thin],[428,452,'Voi...'],[459,487,'&nbsp; Voi...',[[14,100,.95,'s']]],[487,511,'Voi...',[[0,72,.9,'s']]],[574,582,'',[[10,65,.9,'d']]],[813,836,'Voi...',[[32,98,.95,'s']]],[851,852,'',thin],[857,888,'&nbsp; Voic...'],[889,893,'',thin],[922,927,'',thin],[959,974,''],[990,991,'',thin],[996,1027,'&nbsp; Voic...'],[1028,1031,'',thin],[1060,1107,V,[[12,76,.95,'s']]]]},
 {n:V, fx:'Fx layse no auto-ear to e...', sel:1, c:[[289,311,'▫',tail],[321,333,'▫',dia],[334,337,'',thin],[357,372,'▫',blk],[395,408,'▫',blk],[408,440,'▫',[[0,30,.6,'d'],[30,95,.9,'s']]],[681,791,V,[[1,26,.9,'s'],[34,62,.8,'s'],[66,92,.9,'s']]],[811,833,'▫',tail],[844,855,'▫',dia],[855,858,'',thin],[879,894,'▫',blk],[949,971,'▫',tail],[982,994,'▫',dia],[994,997,'',thin],[1017,1032,'▫',blk],[1046,1140,V,[[6,24,.5,'s'],[18,24,.9,'d'],[28,56,.85,'s'],[54,62,.3,'d'],[71,76,.15,'d'],[80,89,.9,'d']]]]},
 {n:V, fx:'Fx layse no auto-ear to e...', c:[[391,403,'',[[10,60,.4,'d'],[50,95,.95,'d']]],[431,519,V,[[0,4,.9,'b'],[12,26,.95,'s'],[32,48,.95,'k'],[54,84,.95,'s']]],[533,600,V,[[3,50,.25,'n'],[40,75,.5,'d'],[60,100,.4,'n']]],[1050,1063,'',[[10,95,.8,'d']]]]},
 {n:V, fx:'Fx log', c:[[248,266,'',[[30,65,.95,'d']]],[270,321,V,[[10,20,.95,'d'],[34,46,.8,'d'],[70,92,.85,'d']]],[367,389,'Voi...',[[48,85,.9,'d']]],[452,513,V,[[20,28,.2,'d'],[34,44,.25,'d'],[48,58,.3,'d'],[62,72,.3,'d'],[77,87,.4,'d']]],[519,580,V,[[10,24,.6,'s'],[22,54,.95,'h'],[74,100,.5,'d']]],[929,982,V,[[12,22,.8,'d'],[34,46,.8,'d'],[70,90,.9,'d']]],[1026,1050,'Voi...',[[40,85,.9,'d']]]]},
 {n:V, fx:'Fx log', c:[[382,402,'',[[35,90,.7,'d'],[48,66,.95,'d']]],[1043,1062,'',[[35,90,.6,'d'],[45,62,.9,'d']]]]}
];
const editClips = [
 [631,714,V,[[20,42,.57,'h'],[28,85,.38,'f'],[44,62,.12,'n']]],[714,726,'',[]],
 [773,823,'Voice/Au...',[[36,54,.45,'d'],[55,88,1,'p']]],[827,840,'',[[20,80,.3,'d'],[62,100,1,'p']]],
 [928,998,V,[[13,89,.99,'k'],[92,100,.15,'r']]],
 [1099,1152,V,[[12,84,.99,'k'],[66,96,.5,'f']]],
 [1152,1277,V,[[18,29,.55,'d'],[25,38,1,'p'],[42,49,.75,'d'],[50,68,.4,'d'],[54,85,.48,'h'],[55,63,1,'d'],[60,67,.9,'d'],[66,86,1,'p'],[84,108,1,'p']]]
];

el('heads').innerHTML = tracks.map((t, i) => `
 <div class="track-head d-flex flex-column${t.sel ? ' sel' : ''}"><div class="d-flex align-items-center" style="height:11px">
  <svg class="ic ic-s me-1" color="${i ? '#b85a20' : '#d0a020'}"><use href="#mic"/></svg><span class="me-1">0${i + 1}</span><span class="track-name">${t.n}</span>
  <span class="me-1">⋮</span><div class="ms d-flex justify-content-around"><button><b>M</b></button><button>S</button></div>
  <button class="circle ms-1" style="width:11px;height:11px" aria-label="Track ${i + 1} options"><svg class="ic ic-s"><use href="#chev"/></svg></button></div>
  <div class="fx-chip${t.fx ? '' : ' none'}">${t.fx || '+ Fx'}</div>
  <div class="mix-row d-flex align-items-center justify-content-between"><input type="range" value="70"${t.sel ? ' style="--on:#c8682a"' : ''} aria-label="Track ${i + 1} volume">
  <div class="knob-wrap d-flex">L<i class="knob"></i>R</div></div></div>`).join('');
el('lanes').innerHTML = tracks.map((t, i) => `<div class="lane${t.sel ? ' sel' : ''}">${t.c.map(c => clip(c, SPAN, 190, !i)).join('')}</div>`).join('');

let r = `<i class="loop-mark" style="left:${604 / SPAN * 100}%;width:${15 / SPAN * 100}%"></i>`;
for (let b = 1; b < 41; b += 2) r += `<span style="left:${(b - 1) * 26.1 / SPAN * 100}%">${b}</span>`;
el('ruler').innerHTML = r;
el('playhead').style.cssText = `left:${239 / SPAN * 100}%;top:19px;bottom:0`;

let e = '';
for (let k = 0; k < 36; k++) e += `<span style="left:${k * 28.8 / EDIT_SPAN * 100}%">${1 + (k >> 2)}${k % 4 ? '.' + (k % 4 + 1) : ''}</span>`;
el('eruler').innerHTML = e;
el('ebody').innerHTML = editClips.map(c => clip(c, EDIT_SPAN, 190)).join('') + `<div class="playhead low" style="left:${1053 / EDIT_SPAN * 100}%;top:0;bottom:0"></div>`;
</script>
</body>
</html>
